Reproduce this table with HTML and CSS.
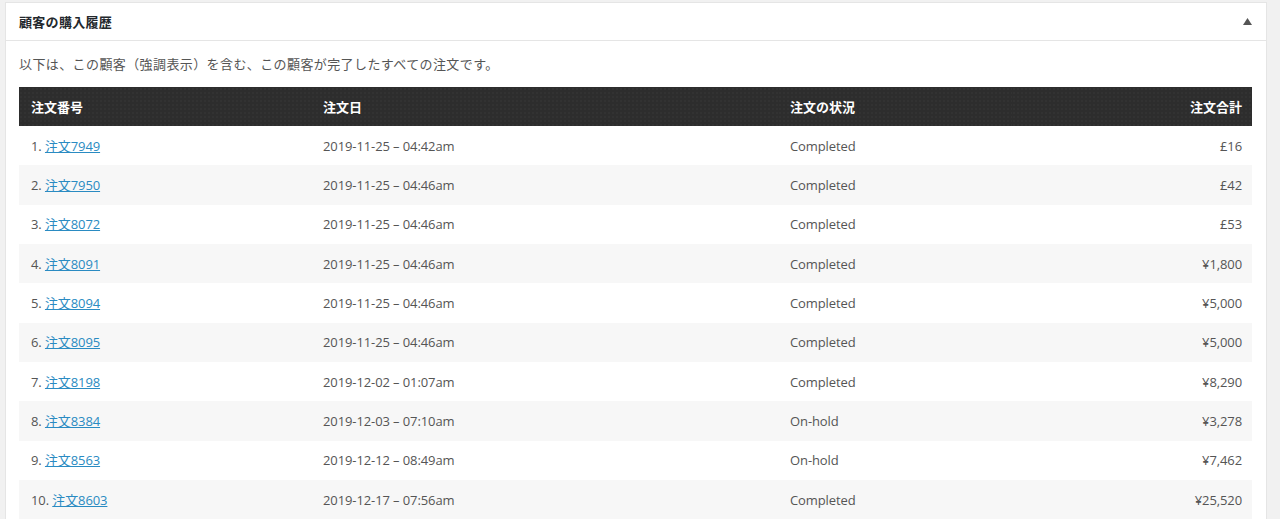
FILE: index.html
```html
<!DOCTYPE html>
<html lang="ja">
<head>
<meta charset="utf-8">
<title>顧客の購入履歴</title>
<link rel="stylesheet" href="styles.css">
</head>
<body>
<div class="panel">
  <div class="panel-head">
    <h2 class="panel-title">顧客の購入履歴</h2>
    <svg class="toggle" width="9" height="7" viewBox="0 0 9 7"><polygon points="4.5,0 9,7 0,7" fill="#555"/></svg>
  </div>
  <div class="panel-body">
    <p class="desc">以下は、この顧客（強調表示）を含む、この顧客が完了したすべての注文です。</p>
    <table class="orders">
      <colgroup>
        <col class="c1"><col class="c2"><col class="c3"><col class="c4">
      </colgroup>
      <thead>
        <tr><th>注文番号</th><th>注文日</th><th>注文の状況</th><th class="num">注文合計</th></tr>
      </thead>
      <tbody>
        <tr><td>1. <a href="#">注文7949</a></td><td>2019-11-25 – 04:42am</td><td>Completed</td><td class="num">£16</td></tr>
        <tr><td>2. <a href="#">注文7950</a></td><td>2019-11-25 – 04:46am</td><td>Completed</td><td class="num">£42</td></tr>
        <tr><td>3. <a href="#">注文8072</a></td><td>2019-11-25 – 04:46am</td><td>Completed</td><td class="num">£53</td></tr>
        <tr><td>4. <a href="#">注文8091</a></td><td>2019-11-25 – 04:46am</td><td>Completed</td><td class="num">¥1,800</td></tr>
        <tr><td>5. <a href="#">注文8094</a></td><td>2019-11-25 – 04:46am</td><td>Completed</td><td class="num">¥5,000</td></tr>
        <tr><td>6. <a href="#">注文8095</a></td><td>2019-11-25 – 04:46am</td><td>Completed</td><td class="num">¥5,000</td></tr>
        <tr><td>7. <a href="#">注文8198</a></td><td>2019-12-02 – 01:07am</td><td>Completed</td><td class="num">¥8,290</td></tr>
        <tr><td>8. <a href="#">注文8384</a></td><td>2019-12-03 – 07:10am</td><td>On-hold</td><td class="num">¥3,278</td></tr>
        <tr><td>9. <a href="#">注文8563</a></td><td>2019-12-12 – 08:49am</td><td>On-hold</td><td class="num">¥7,462</td></tr>
        <tr><td>10. <a href="#">注文8603</a></td><td>2019-12-17 – 07:56am</td><td>Completed</td><td class="num">¥25,520</td></tr>
      </tbody>
    </table>
  </div>
</div>
</body>
</html>
```

FILE: styles.css
```css
html, body {
  margin: 0;
  padding: 0;
}
body {
  background: #f1f1f1;
  font-family: "Open Sans", "Noto Sans CJK JP", sans-serif;
  font-size: 13px;
  color: #555;
  padding: 2px 13px 0 5px;
}
.panel {
  background: #fff;
  border: 1px solid #e5e5e5;
}
.panel-head {
  height: 37px;
  border-bottom: 1px solid #e5e5e5;
  display: flex;
  align-items: center;
  justify-content: space-between;
  padding: 0 14px 0 13px;
}
.panel-title {
  margin: 0;
  font-size: 13px;
  font-weight: 700;
  color: #23282d;
  line-height: 20px;
  letter-spacing: 0.3px;
}
.toggle {
  display: block;
  margin-top: -1px;
}
.panel-body {
  padding: 13px 14px 0 13px;
}
.desc {
  margin: 0 0 13px;
  line-height: 20px;
  color: #555;
  letter-spacing: 0.4px;
}
.orders {
  width: 100%;
  border-collapse: collapse;
  table-layout: fixed;
}
.c1 { width: 292px; }
.c2 { width: 467px; }
.c4 { width: 240px; }
.orders th {
  background-color: #2d2d2d;
  background-image: radial-gradient(circle, rgba(255,255,255,0.05) 0.6px, transparent 0.8px);
  background-size: 4px 4px;
  color: #fff;
  font-weight: 700;
  text-align: left;
  height: 39px;
  padding: 0 10px 0 12px;
  box-sizing: border-box;
  line-height: 20px;
}
.orders td {
  height: 39.33px;
  padding: 0 10px 0 12px;
  box-sizing: border-box;
  line-height: 20px;
  color: #555;
  letter-spacing: -0.1px;
}
.orders tbody tr:nth-child(even) td {
  background: #f7f7f7;
}
.orders .num {
  text-align: right;
}
.orders a {
  color: #2a8bc2;
  text-decoration: underline;
}
```
